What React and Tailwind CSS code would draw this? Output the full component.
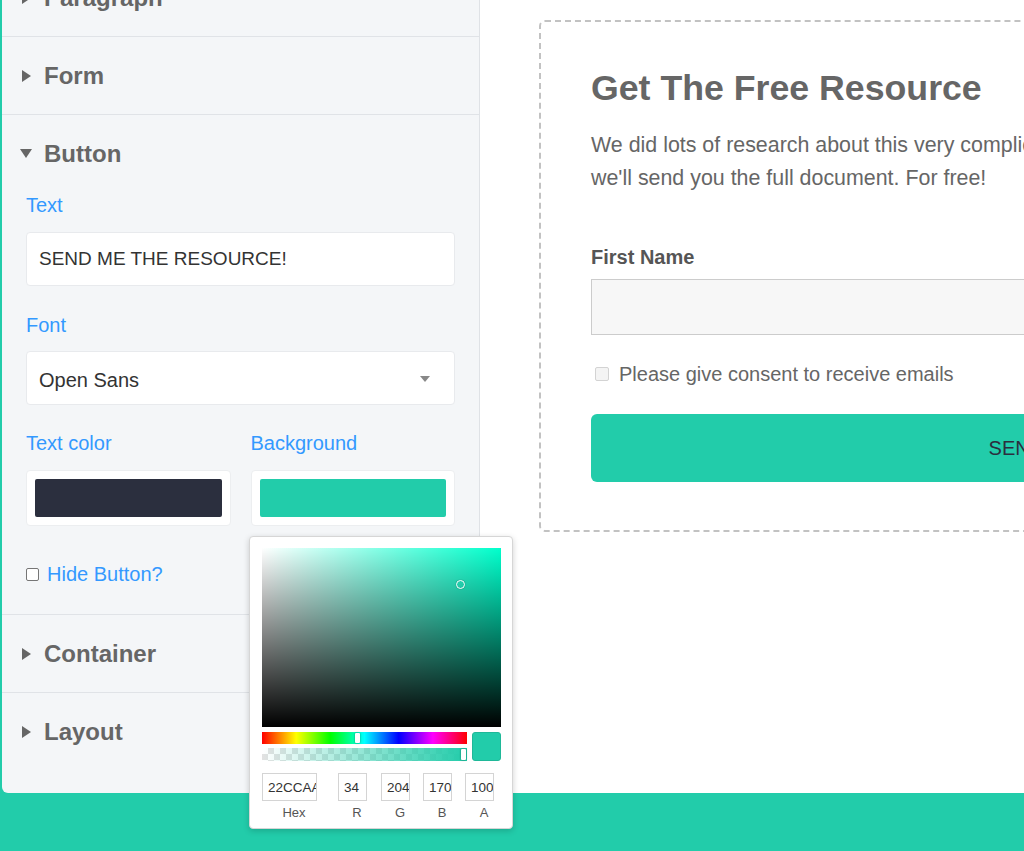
import React from "react";

function Caret({ open }) {
  return open ? (
    <svg width="24" height="14" viewBox="0 0 24 14" className="shrink-0">
      <polygon points="0,2 12,2 6,11" fill="#666666" />
    </svg>
  ) : (
    <svg width="24" height="14" viewBox="0 0 24 14" className="shrink-0">
      <polygon points="2,1 11,7 2,13" fill="#666666" />
    </svg>
  );
}

function SectionHeader({ title, open, border = true, extra = "" }) {
  return (
    <div
      className={`flex h-[78px] items-center pl-[18px] ${border ? "border-b border-[#e0e3e7]" : ""} ${extra}`}
    >
      <Caret open={open} />
      <span className="text-[24px] font-bold leading-[28px] text-[#666666]">{title}</span>
    </div>
  );
}

function Label({ children, className = "" }) {
  return <div className={`h-[24px] text-[20px] leading-[24px] text-[#3399ff] ${className}`}>{children}</div>;
}

function ColorPicker() {
  const inputs = [
    { v: "22CCAA", l: "Hex", w: "w-[55px]", m: "" },
    { v: "34", l: "R", w: "w-[29px]", m: "ml-[21px]" },
    { v: "204", l: "G", w: "w-[29px]", m: "ml-[14px]" },
    { v: "170", l: "B", w: "w-[29px]", m: "ml-[13px]" },
    { v: "100", l: "A", w: "w-[29px]", m: "ml-[13px]" },
  ];
  return (
    <div className="absolute left-[249px] top-[536px] h-[293px] w-[264px] rounded-[4px] border border-[#d6d6d6] bg-white pl-[12px] pr-[11px] pt-[11px] shadow-[0_2px_6px_rgba(0,0,0,0.18)]">
      <div className="relative h-[179px] w-[239px] bg-[#00ffcc]">
        <div className="absolute inset-0 bg-[linear-gradient(to_right,rgba(255,255,255,1),rgba(255,255,255,0))]" />
        <div className="absolute inset-0 bg-[linear-gradient(to_top,rgba(0,0,0,1),rgba(0,0,0,0))]" />
        <div className="absolute left-[194px] top-[32px] h-[9px] w-[9px] rounded-full border-[1.5px] border-white shadow-[0_0_1px_rgba(0,0,0,0.6)]" />
      </div>
      <div className="mt-[5px] flex gap-[5px]">
        <div className="flex w-[205px] flex-col gap-[4px]">
          <div className="relative h-[12px] bg-[linear-gradient(to_right,#ff0000,#ffff00,#00ff00,#00ffff,#0000ff,#ff00ff,#ff0000)]">
            <div className="absolute left-[93px] top-[1px] h-[10px] w-[5px] rounded-[1px] bg-white shadow-[0_0_2px_rgba(0,0,0,0.5)]" />
          </div>
          <div className="relative h-[13px] bg-[linear-gradient(to_right,rgba(34,204,170,0),#22ccaa),repeating-conic-gradient(#e2e2e2_0%_25%,#ffffff_0%_50%)] [background-size:100%_100%,12px_12px]">
            <div className="absolute left-[199px] top-[1px] h-[11px] w-[5px] rounded-[1px] bg-white shadow-[0_0_2px_rgba(0,0,0,0.5)]" />
          </div>
        </div>
        <div className="h-[29px] w-[29px] rounded-[3px] border border-[#1fb898] bg-[#22ccaa]" />
      </div>
      <div className="mt-[12px] flex">
        {inputs.map((i) => (
          <div key={i.l} className={`flex flex-col items-center ${i.m}`}>
            <input
              readOnly
              value={i.v}
              className={`${i.w} h-[28px] border border-[#d4d4d4] bg-white pl-[5px] pr-0 text-[13.5px] leading-[26px] text-[#333333] outline-none`}
            />
            <div className="mt-[4px] pl-[9px] text-[13px] leading-[16px] text-[#555555]">{i.l}</div>
          </div>
        ))}
      </div>
    </div>
  );
}

export default function App() {
  return (
    <div className="relative h-[851px] w-[1024px] overflow-hidden bg-[#22ccaa] font-['Liberation_Sans',Arial,sans-serif]">
      <div className="ml-[2px] flex h-[793px]">
        <aside className="w-[478px] shrink-0 overflow-hidden rounded-bl-[6px] border-r border-[#dfe2e6] bg-[#f4f6f8]">
          <SectionHeader title="Paragraph" extra="-mt-[41px]" />
          <SectionHeader title="Form" />
          <div className="border-b border-[#e0e3e7] pb-[28px]">
            <SectionHeader title="Button" open border={false} />
            <div className="px-[24px]">
              <Label>Text</Label>
              <div className="mt-[15px] flex h-[54px] items-center rounded-[4px] border border-[#e8eaed] bg-white px-[12px] text-[19px] text-[#333333]">
                SEND ME THE RESOURCE!
              </div>
              <Label className="mt-[27px]">Font</Label>
              <div className="mt-[14px] flex h-[54px] items-center justify-between rounded-[4px] border border-[#e8eaed] bg-white pl-[12px] pr-[24px] pt-[3px] text-[20px] text-[#333333]">
                <span>Open Sans</span>
                <svg width="10" height="7" viewBox="0 0 10 7">
                  <polygon points="0,0 10,0 5,6" fill="#888888" />
                </svg>
              </div>
              <div className="mt-[26px] grid grid-cols-2 gap-x-[20px]">
                <div>
                  <Label>Text color</Label>
                  <div className="mt-[15px] h-[56px] rounded-[4px] border border-[#eceef0] bg-white p-[8px]">
                    <div className="h-full rounded-[2px] bg-[#2b2f3e]" />
                  </div>
                </div>
                <div>
                  <Label>Background</Label>
                  <div className="mt-[15px] h-[56px] rounded-[4px] border border-[#eceef0] bg-white p-[8px]">
                    <div className="h-full rounded-[2px] bg-[#22ccaa]" />
                  </div>
                </div>
              </div>
              <div className="mt-[36px] flex h-[24px] items-center gap-[8px]">
                <span className="h-[13px] w-[13px] rounded-[2px] border border-[#767676] bg-white" />
                <span className="text-[20px] leading-[24px] text-[#3399ff]">Hide Button?</span>
              </div>
            </div>
          </div>
          <SectionHeader title="Container" />
          <SectionHeader title="Layout" border={false} />
        </aside>
        <main className="min-w-0 flex-1 overflow-hidden bg-white">
          <div className="ml-[59px] mt-[20px] w-[1160px] rounded-[6px] border-2 border-dashed border-[#c2c2c2] pb-[48px] pl-[50px] pr-[50px] pt-[45px]">
            <h1 className="whitespace-nowrap text-[35.7px] font-bold leading-[42px] text-[#666666]">
              Get The Free Resource
            </h1>
            <div className="mt-[20px] whitespace-nowrap text-[21.4px] leading-[33px] text-[#666666]">
              <div>We did lots of research about this very complicated topic and summarized it, and</div>
              <div>we'll send you the full document. For free!</div>
            </div>
            <div className="mt-[50px] text-[20px] font-bold leading-[24px] text-[#555555]">First Name</div>
            <div className="mt-[10px] h-[56px] border border-[#cccccc] bg-[#f7f7f7]" />
            <div className="mt-[27px] flex h-[24px] items-center gap-[10px] pl-[4px]">
              <span className="h-[14px] w-[14px] rounded-[2px] border border-[#d3d3d3] bg-[#f4f4f4]" />
              <span className="text-[20px] leading-[24px] text-[#666666]">Please give consent to receive emails</span>
            </div>
            <div className="mt-[28px] flex h-[68px] items-center justify-center rounded-[6px] bg-[#22ccaa] text-[20px] text-[#2b2f3e]">
              SEND ME THE RESOURCE!
            </div>
          </div>
        </main>
      </div>
      <ColorPicker />
    </div>
  );
}
